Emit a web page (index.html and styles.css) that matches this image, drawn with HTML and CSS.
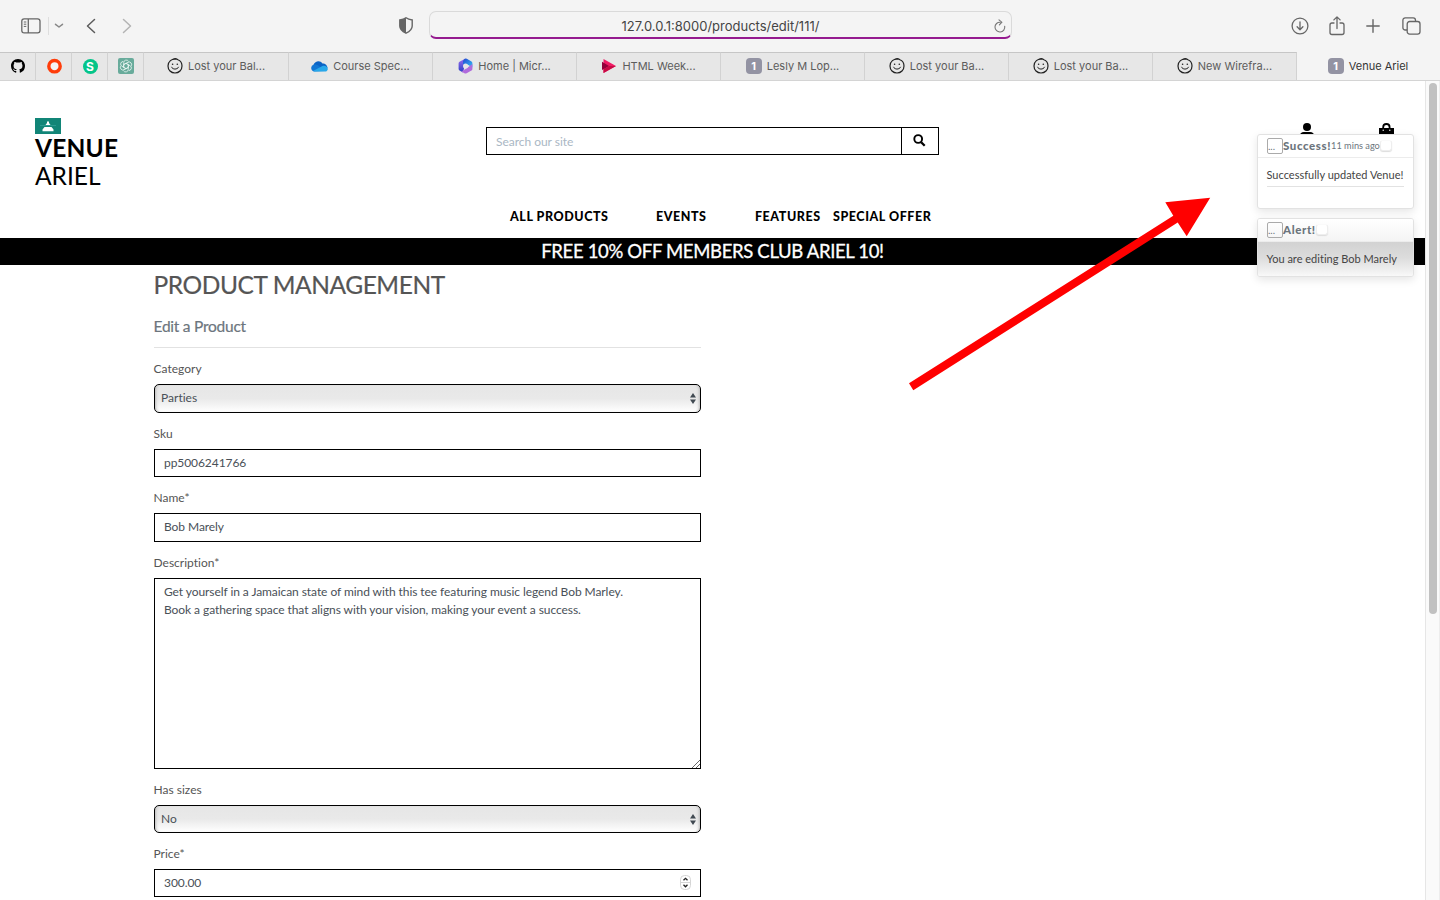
FILE: index.html
```html
<!DOCTYPE html>
<html lang="en">
<head>
<meta charset="utf-8">
<title>Venue Ariel</title>
<link rel="stylesheet" href="styles.css">
</head>
<body>
<svg class="defs" width="0" height="0" aria-hidden="true">
  <symbol id="smile" viewBox="0 0 16 16">
    <g fill="none" stroke="#222" stroke-linecap="round">
      <path stroke-width="1.200" d="M9.300 1.200C4.600 .4 1 3.600 1 8c0 4 3 7 7 7s7-3 7-7c0-3-1.700-5.400-4.200-6.300M6 1.300C7.500.500 9.200.6 10.600 1.400"/>
      <path stroke-width="1" d="M4.600 9.200c.8 2.500 5.800 2.700 6.900 0"/>
    </g>
    <circle cx="5.600" cy="6.200" r=".8" fill="#222"/><circle cx="10.300" cy="6.200" r=".8" fill="#222"/>
  </symbol>
</svg>

<header class="toolbar">
  <div class="tools-left">
    <svg width="20" height="16" viewBox="0 0 20 16" fill="none" stroke="#666" stroke-width="1.300"><rect x=".8" y=".8" width="18.200" height="14" rx="2.400"/><path d="M7.300 1v14"/><path stroke-width="1" d="M2.800 4h2.500M2.800 6.200h2.500M2.800 8.400h2.500"/></svg>
    <i class="tool-rule"></i>
    <svg class="caret" width="10" height="6" viewBox="0 0 10 6" fill="none" stroke="#888" stroke-width="1.500" stroke-linecap="round" stroke-linejoin="round"><path d="M1.500 1.300 5 4l3.500-2.700"/></svg>
    <svg class="back" width="10" height="16" viewBox="0 0 10 16" fill="none" stroke="#5c5c5c" stroke-width="1.500" stroke-linecap="round" stroke-linejoin="round"><path d="M8.500 1.500 1.500 8l7 6.500"/></svg>
    <svg class="forward" width="10" height="16" viewBox="0 0 10 16" fill="none" stroke="#b4b4b4" stroke-width="1.500" stroke-linecap="round" stroke-linejoin="round"><path d="m1.500 1.500 7 6.500-7 6.500"/></svg>
  </div>
  <div class="tools-center">
    <svg width="14" height="17" viewBox="0 0 14 17"><path d="M7 .8C5.500 2 3 2.800.8 3v6c0 3.500 2.500 5.500 6.200 7.200 3.700-1.700 6.200-3.700 6.200-7.200V3C11 2.800 8.500 2 7 .8z" fill="none" stroke="#666" stroke-width="1.400"/><path d="M7 .8C5.500 2 3 2.800.8 3v6c0 3.500 2.500 5.500 6.200 7.200z" fill="#666"/></svg>
    <div class="address">
      <span class="url">127.0.0.1:8000/products/edit/111/</span>
      <svg class="reload" width="12" height="14" viewBox="0 0 12 14" fill="none" stroke="#777" stroke-width="1.100" stroke-linecap="round"><path d="M10.700 7.200A4.900 4.900 0 1 1 6.300 3.200"/><path d="M5 .8l2.800 2.400L5.400 5.800"/></svg>
    </div>
  </div>
  <div class="tools-right">
    <svg width="18" height="18" viewBox="0 0 18 18" fill="none" stroke="#666" stroke-width="1.300" stroke-linecap="round" stroke-linejoin="round"><circle cx="9" cy="9" r="7.900"/><path d="M9 4.800v7.700M6.100 9.800 9 12.700l2.900-2.900"/></svg>
    <svg width="16" height="20" viewBox="0 0 16 20" fill="none" stroke="#666" stroke-width="1.300" stroke-linecap="round" stroke-linejoin="round"><path d="M5 7H3a2 2 0 0 0-2 2v7.500a2 2 0 0 0 2 2h10a2 2 0 0 0 2-2V9a2 2 0 0 0-2-2h-2"/><path d="M8 12.500V1M4.900 3.900 8 .900l3.100 3"/></svg>
    <svg width="14" height="14" viewBox="0 0 14 14" fill="none" stroke="#666" stroke-width="1.400" stroke-linecap="round"><path d="M7 .800v12.400M.8 7h12.400"/></svg>
    <svg width="19" height="18" viewBox="0 0 19 18" fill="none" stroke="#666" stroke-width="1.300"><rect x="5.200" y="4.500" width="12.800" height="12.600" rx="2.400"/><path d="M5 13H3.200A2.300 2.300 0 0 1 .9 10.700V3.200A2.300 2.300 0 0 1 3.200.9h8A2.300 2.300 0 0 1 13.500 3.200v1"/></svg>
  </div>
</header>

<nav class="tabs">
  <a class="pin"><svg width="14" height="14" viewBox="0 0 16 16"><path d="M8 0C3.580 0 0 3.580 0 8c0 3.540 2.290 6.530 5.470 7.590.4.070.55-.17.55-.38 0-.19-.01-.82-.01-1.490-2.010.37-2.530-.49-2.690-.94-.09-.23-.48-.94-.82-1.130-.28-.15-.68-.52-.01-.53.63-.01 1.080.58 1.230.82.72 1.210 1.870.87 2.330.66.07-.52.28-.87.51-1.070-1.780-.2-3.640-.89-3.640-3.950 0-.87.31-1.590.82-2.150-.08-.2-.36-1.020.08-2.120 0 0 .67-.21 2.200.82.64-.18 1.320-.27 2-.27s1.360.09 2 .27c1.530-1.040 2.200-.82 2.200-.82.44 1.100.16 1.920.08 2.120.51.56.82 1.270.82 2.150 0 3.070-1.870 3.750-3.650 3.950.29.25.54.73.54 1.480 0 1.070-.01 1.930-.01 2.200 0 .21.15.46.55.38A8.010 8.010 0 0 0 16 8c0-4.420-3.580-8-8-8z"/></svg></a>
  <a class="pin"><svg width="16" height="16" viewBox="0 0 16 16"><circle cx="8.500" cy="8.200" r="5.700" fill="#f4f4f4" stroke="#ff3d0a" stroke-width="3.400"/></svg></a>
  <a class="pin"><span class="s-badge">S</span></a>
  <a class="pin"><svg width="16" height="16" viewBox="0 0 16 16"><rect width="16" height="16" rx="2" fill="#68ab9b"/><g fill="none" stroke="#e9f5f2" stroke-width=".8"><path id="petal" d="M5.700 4.400A2.600 2.600 0 0 1 10.500 3.300M5.700 4.400V9.400L8 10.700"/><use href="#petal" transform="rotate(60 8 8)"/><use href="#petal" transform="rotate(120 8 8)"/><use href="#petal" transform="rotate(180 8 8)"/><use href="#petal" transform="rotate(240 8 8)"/><use href="#petal" transform="rotate(300 8 8)"/></g></svg></a>
  <a class="tab"><svg width="16" height="16"><use href="#smile"/></svg><span>Lost your Bal...</span></a>
  <a class="tab"><svg width="17" height="12" viewBox="0 0 17 12"><path d="M2.500 5C4 1 9 0 11.500 3.500 14 3.300 16.500 5.500 16.500 8L9 9z" fill="#0b63c5"/><path d="M3.500 11.500a3.500 3.500 0 0 1-.6-6.900c2-.4 3.500.3 5 1.300L14 11z" fill="#1276d3"/><path d="M2 11 11 6.200c3-1.500 5.800.6 5.800 2.800 0 1.500-1.200 2.600-2.700 2.600H3.500z" fill="#28a8ea"/></svg><span>Course Spec...</span></a>
  <a class="tab"><svg width="15" height="16" viewBox="0 0 15 16"><defs><linearGradient id="mc" x2="0" y2="1"><stop stop-color="#9a6cf0"/><stop offset="1" stop-color="#2a3fc4"/></linearGradient><linearGradient id="mb" x2="1" y2="1"><stop stop-color="#2346cf"/><stop offset="1" stop-color="#35c0f8"/></linearGradient></defs><path d="M7.500.5 1.500 3.800Q.6 4.300.6 5.300V11q0 1 .9 1.400L5 14.500l1-4V5z" fill="url(#mc)"/><path d="M6.300 1Q7.500.2 8.800.8l4.700 2.800q.9.5.9 1.600V9.500L9.500 6.500 5 6.500V3z" fill="url(#mb)"/><path d="M14.400 6v5q0 1-.9 1.500l-4.900 2.800q-1.100.6-2.200 0L3.500 13.500 9 10z" fill="#b06bdc"/><circle cx="7.500" cy="8" r="2.500" fill="#e7e7e7"/></svg><span>Home | Micr...</span></a>
  <a class="tab"><svg width="16" height="16" viewBox="0 0 16 16"><path d="m2.500 1 12.500 7L2.500 15z" fill="#f01a64"/><path d="m1 3.800 7 4.200-7 4z" fill="#93003a"/><path d="M2.500 15 15 8H8l-5.500 3.200z" fill="#c80b45"/></svg><span>HTML Week...</span></a>
  <a class="tab"><b class="num">1</b><span>Lesly M Lop...</span></a>
  <a class="tab"><svg width="16" height="16"><use href="#smile"/></svg><span>Lost your Ba...</span></a>
  <a class="tab"><svg width="16" height="16"><use href="#smile"/></svg><span>Lost your Ba...</span></a>
  <a class="tab"><svg width="16" height="16"><use href="#smile"/></svg><span>New Wirefra...</span></a>
  <a class="tab active"><b class="num">1</b><span>Venue Ariel</span></a>
</nav>

<div class="viewport">
  <div class="page">
    <div class="site-header">
      <a class="brand">
        <svg width="26" height="16" viewBox="0 0 26 16"><path fill="#118577" d="M0 0h26v16H0z"/><path fill="#2a9a90" d="M5 7h16v1H5z"/><path fill="#fff" d="M12 3.500h2V5l1.500 2h-5L12 5zM9.500 9h7l2 2.500v1.700h-11v-1.700z"/></svg>
        <strong>VENUE</strong>
        <span>ARIEL</span>
      </a>
      <form class="search">
        <input type="text" placeholder="Search our site">
        <button type="button" aria-label="Search"><svg width="13" height="13" viewBox="0 0 13 13" fill="none" stroke="#000"><circle cx="5.200" cy="5" r="3.900" stroke-width="1.900"/><path d="m8.200 8.200 3.500 3.500" stroke-width="2.300"/></svg></button>
      </form>
      <div class="account">
        <svg width="14" height="16" viewBox="0 0 14 16"><circle cx="7" cy="4" r="4"/><path d="M0 14v-1.500C0 10.500 1.500 9 3.800 9h6.400c2.300 0 3.800 1.500 3.800 3.500V14z"/></svg>
        <svg width="15" height="16" viewBox="0 0 15 16"><path d="M0 5h15v9H0z"/><path d="M4.200 7V4.200a3.200 3.200 0 0 1 6.400 0V7" fill="none" stroke="#000" stroke-width="1.800"/><circle cx="4.200" cy="7.300" r=".7" fill="#fff"/><circle cx="10.800" cy="7.300" r=".7" fill="#fff"/></svg>
      </div>
    </div>
    <nav class="menu">
      <a class="m-all">ALL PRODUCTS</a><a class="m-events">EVENTS</a><a class="m-features">FEATURES</a><a class="m-offer">SPECIAL OFFER</a>
    </nav>
    <div class="promo"><span>FREE 10% OFF MEMBERS CLUB ARIEL 10!</span></div>
    <main class="content">
      <h2><span>PRODUCT MANAGEMENT</span></h2>
      <h5><span>Edit a Product</span></h5>
      <hr>
      <form class="product">
        <div class="field"><label>Category</label><div class="select"><select><option>Parties</option></select><svg width="6" height="11" viewBox="0 0 6 11"><path d="M3 0l3 4.500H0zM3 11l3-4.500H0z" fill="#414a52"/></svg></div></div>
        <div class="field"><label>Sku</label><input type="text" value="pp5006241766"></div>
        <div class="field"><label>Name*</label><input type="text" value="Bob Marely"></div>
        <div class="field"><label>Description*</label><div class="area"><textarea spellcheck="false">Get yourself in a Jamaican state of mind with this tee featuring music legend Bob Marley.
Book a gathering space that aligns with your vision, making your event a success.</textarea><svg width="8" height="8" viewBox="0 0 8 8" stroke="#555" stroke-width=".9"><path d="M0 8 8 0M4 8l4-4"/></svg></div></div>
        <div class="field"><label>Has sizes</label><div class="select"><select><option>No</option></select><svg width="6" height="11" viewBox="0 0 6 11"><path d="M3 0l3 4.500H0zM3 11l3-4.500H0z" fill="#414a52"/></svg></div></div>
        <div class="field"><label>Price*</label><div class="number"><input type="text" value="300.00"><svg width="11" height="15" viewBox="0 0 11 15" fill="none"><rect x=".5" y=".5" width="10" height="14" rx="4" stroke="#d5d5d5" fill="#fff"/><path stroke="#d5d5d5" d="M1 7.500h9"/><path stroke="#222" stroke-width="1.300" d="M3.500 5.300l2-2 2 2M3.500 9.800l2 2 2-2"/></svg></div></div>
      </form>
    </main>
  </div>
  <div class="scroll-track"><div class="scroll-thumb"></div></div>
</div>

<aside class="toasts">
  <section class="toast success">
    <header><span class="thumb">...</span><strong>Success!</strong><small>11 mins ago</small><i class="close"></i></header>
    <div class="toast-body"><p>Successfully updated Venue!</p><hr></div>
  </section>
  <section class="toast alert">
    <header><span class="thumb">...</span><strong>Alert!</strong><i class="close"></i></header>
    <div class="toast-body"><p>You are editing Bob Marely</p></div>
  </section>
</aside>

<svg class="arrow" width="304" height="196" viewBox="908 196 304 196"><path fill="#f00" d="M1210.200 197.700 1186.700 236.300 1177.700 222.500 913.300 390.200 909 383.300 1173.300 215.800 1165.300 202.300z"/></svg>
</body>
</html>
```

FILE: styles.css
```css
* { box-sizing: border-box; }
body {
  margin: 0;
  height: 900px;
  overflow: hidden;
  position: relative;
  display: flex;
  flex-direction: column;
  font-family: Lato, sans-serif;
  color: #555;
  background: #fff;
}
svg { display: block; flex: none; }
.defs { position: absolute; }

/* browser toolbar */
.toolbar {
  flex: none;
  height: 52px;
  background: #f4f4f4;
  display: grid;
  grid-template-columns: 399px 614px 1fr;
}
.tools-left, .tools-center, .tools-right { display: flex; align-items: center; padding-bottom: 1px; }
.tools-left { padding-left: 21px; }
.tool-rule { width: 1px; height: 18px; background: #dedede; margin-left: 7px; }
.caret { margin-left: 5px; }
.back { margin-left: 22px; }
.forward { margin-left: 26px; }
.tools-center { gap: 16px; }
.address {
  width: 583px;
  height: 28px;
  margin-top: -1px;
  border: 1px solid #dadada;
  border-bottom: 2px solid #951b8f;
  border-radius: 7px;
  display: flex;
  align-items: center;
  justify-content: center;
  padding: 2px 5px 0 17px;
}
.url {
  flex: 1;
  text-align: center;
  font: 13px/16px Inter, sans-serif;
  color: #444;
  letter-spacing: 0;
}
.tools-right { padding-left: 278px; }
.tools-right svg:nth-child(2) { margin-left: 20px; }
.tools-right svg:nth-child(3) { margin-left: 21px; }
.tools-right svg:nth-child(4) { margin-left: 22px; }

/* tab strip */
.tabs {
  flex: none;
  height: 29px;
  display: flex;
  background: #f4f4f4;
  border-bottom: 1px solid #d4d4d4;
}
.pin, .tab {
  display: flex;
  align-items: center;
  justify-content: center;
  background: #e7e7e7;
  border-right: 1px solid #d2d2d2;
  border-top: 1px solid #c6c6c6;
  padding-bottom: 1px;
}
.pin { width: 36px; }
.tab {
  width: 144px;
  gap: 5px;
  font: 400 11px/14px Inter, sans-serif;
  color: #5c5c5c;
}
.tab:nth-child(5) { width: 145px; }
.tab.active { width: 143px; background: #f4f4f4; border-color: transparent; color: #333; }
.num {
  width: 16px;
  height: 16px;
  border-radius: 4px;
  background: #9393a3;
  color: #fff;
  font: 700 11px/17px Inter, sans-serif;
  text-align: center;
}
.s-badge {
  width: 15px;
  height: 15px;
  margin-left: 1px;
  border-radius: 50%;
  background: #04c58a;
  color: #fff;
  font: 700 12px/15px Inter, sans-serif;
  text-align: center;
}

/* page viewport */
.viewport { flex: 1; min-height: 0; display: flex; }
.page { width: 1425px; overflow: hidden; }
.scroll-track {
  width: 15px;
  background: #fafafa;
  border-left: 1px solid #e6e6e6;
  border-right: 1px solid #ededed;
  padding: 2px 2px 0 3px;
}
.scroll-thumb { width: 8px; height: 531px; border-radius: 4px; background: #c1c1c1; }

.site-header {
  height: 119px;
  padding: 37px 31px 0 35px;
  display: grid;
  grid-template-columns: 451px 453px 1fr;
  align-items: start;
}
.brand { display: flex; flex-direction: column; color: #000; font-size: 24.5px; line-height: 28px; }
.brand strong { letter-spacing: .2px; }
.search { display: flex; height: 28px; margin-top: 9px; border: 1px solid #000; }
.search input {
  flex: 1;
  min-width: 0;
  border: 0;
  padding: 0 9px;
  font: 12px Lato, sans-serif;
  letter-spacing: -.03px;
}
.search input::placeholder { color: #aab7c4; opacity: 1; }
.search button {
  width: 37px;
  border: 0;
  border-left: 1px solid #000;
  background: #fff;
  padding: 0 0 2px 11px;
}
.account { display: flex; justify-content: flex-end; gap: 65px; padding-top: 5px; }

.menu {
  height: 38px;
  display: flex;
  padding: 8px 0 0 510px;
  font-size: 12.5px;
  line-height: 18px;
  font-weight: 900;
  letter-spacing: .55px;
  color: #000;
}
.m-all { width: 146px; }
.m-events { width: 99px; }
.m-features { width: 78px; }
.m-offer { white-space: nowrap; }
.promo {
  height: 27px;
  background: #000;
  color: #fff;
  font-size: 18.5px;
  line-height: 27px;
  letter-spacing: -.34px;
  text-align: center;
  -webkit-text-stroke: .3px #fff;
}

.content { width: 547px; margin-left: 154px; }
h2, h5, p { margin: 0; font-weight: 400; }
h2 { font-size: 24.5px; line-height: 30px; padding-top: 5px; height: 35px; letter-spacing: -.42px; -webkit-text-stroke: .2px #555; }
h5 { font-size: 15.5px; line-height: 20px; color: #6c757d; padding-top: 16px; height: 47px; letter-spacing: -.24px; -webkit-text-stroke: .2px #6c757d; }
h2 span, h5 span, label { margin-left: -.5px; }
hr { margin: 0; border: 0; border-top: 1px solid #e2e2e2; }
.content form { display: grid; gap: 12px; padding-top: 12px; }
.field { display: grid; grid-template-rows: 24px auto; }
.field:nth-child(5) { margin-bottom: -.5px; }
label { font-size: 12px; line-height: 18px; letter-spacing: .01px; }
.field input, .field select, .field textarea {
  display: block;
  width: 100%;
  height: 28.5px;
  border: 1px solid #000;
  border-radius: 0;
  padding: 0 9px 1px;
  background: #fff;
  color: #495057;
  font: 12px/18px Lato, sans-serif;
  letter-spacing: -.07px;
  outline: 0;
  appearance: none;
}
.field select {
  border-radius: 5px;
  padding: 0 6px;
  letter-spacing: .01px;
  background: linear-gradient(#e6e6e6, #e9e9e9 50%, #fff);
  box-shadow: inset 3px 0 3px -2px #bbb, inset -3px 0 3px -2px #bbb;
}
.field:nth-child(5) select { height: 28px; }
.field textarea { height: 191.5px; padding: 4px 9px; resize: none; overflow: hidden; }
.select, .area, .number { position: relative; }
.select svg { position: absolute; right: 5px; top: 9px; }
.area svg { position: absolute; right: 1px; bottom: 1px; }
.number svg { position: absolute; right: 10px; top: 6px; }

/* notifications over the page */
.toasts { position: absolute; left: 1257px; top: 134px; width: 157px; display: grid; gap: 9px; }
.toast {
  border: 1px solid #e2e2e2;
  border-radius: 3px;
  box-shadow: 0 3px 9px rgba(0,0,0,.1);
  overflow: hidden;
  background: #fff;
}
.toast.success { height: 75px; }
.toast.alert { height: 59px; }
.toast header {
  height: 23px;
  display: flex;
  align-items: center;
  padding: 0 0 1px 9px;
  border-bottom: 1px solid #ececec;
  color: #6c757d;
}
.toast.alert header { background: linear-gradient(#fff, #f4f4f4); }
.thumb { width: 16px; height: 16px; border: 1px solid #aaa; border-radius: 2px; font-size: 10px; line-height: 15px; overflow: hidden; }
.toast strong { font-size: 11.5px; font-weight: 900; letter-spacing: .6px; }
.toast small { font-size: 9.2px; }
.close { width: 12px; height: 11px; border-radius: 3px; border: 1px solid #eee; border-top-color: #fafafa; background: #fff; box-shadow: 0 1px 1px #ddd; }
.toast-body { padding: 9px 9px 0 8.500px; font-size: 11px; line-height: 16px; color: #444; white-space: nowrap; }
.toast-body p { letter-spacing: .01px; }
.toast-body hr { margin-top: 3px; }
.alert .toast-body { height: 35px; background: linear-gradient(#d2d2d2, #dcdcdc 45%, #fafafa); }

.arrow { position: absolute; left: 908px; top: 196px; }
```
